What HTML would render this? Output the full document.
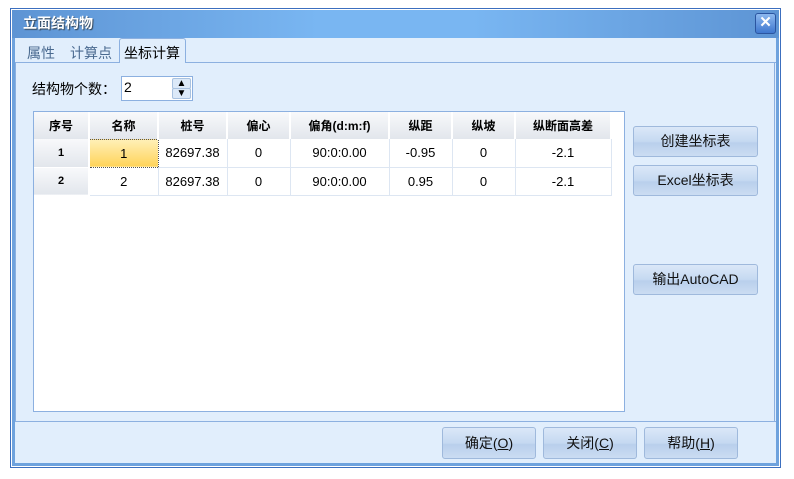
<!DOCTYPE html>
<html><head><meta charset="utf-8"><style>
*{margin:0;padding:0;box-sizing:border-box}
body{width:794px;height:479px;background:#fff;position:relative;overflow:hidden;font-family:"Liberation Sans","Noto Sans CJK SC",sans-serif;font-size:13px;color:#000}
.a{position:absolute}
.btn{position:absolute;border:1px solid #9fb9dc;border-radius:3px;background:linear-gradient(#dbe8f8,#c5d9f1 50%,#b9cfec 55%,#cbdcf2);text-align:center;font-size:13px;color:#111}
table{border-collapse:collapse;position:absolute;left:34px;top:112px;font-size:13px}
td{border-right:1px solid #dde6f2;border-bottom:1px solid #dde6f2;text-align:center;height:28px;padding:0}
th{height:27px;font-size:12px;font-weight:bold;background:linear-gradient(#f8f9fb,#e2e6ec);border-right:2px solid #fff;padding:0}
td.rh{background:linear-gradient(#f8f9fb,#e2e6ec);font-weight:bold;font-size:11px;border-right:2px solid #fff;border-bottom:1px solid #fff}
</style></head><body>
<div class="a" style="left:10px;top:8px;width:771px;height:460px;border:1px solid #3c6fbf;background:#fff"></div>
<div class="a" style="left:12px;top:10px;width:767px;height:456px;background:#6ea2dd"></div>
<div class="a" style="left:12px;top:10px;width:767px;height:28px;background:linear-gradient(90deg,#5d94d4,#79b6f2 40%,#79b6f2 60%,#5d94d4)"></div>
<div class="a" style="left:23px;top:13px;color:#fff;font-weight:bold;font-size:14px;text-shadow:1px 1px 1px #345">立面结构物</div>
<div class="a" style="left:755px;top:13px;width:21px;height:21px;border:1px solid #2b55a0;border-radius:3px;background:linear-gradient(#8cb8ef,#3f77cf);color:#fff;font-weight:bold;font-size:15px;text-align:center;line-height:18px">✕</div>
<div class="a" style="left:15px;top:38px;width:761px;height:425px;background:#e1eefc"></div>
<div class="a" style="left:15px;top:62px;width:761px;height:1px;background:#8cb0e0"></div>
<div class="a" style="left:15px;top:62px;width:1px;height:360px;background:#8cb0e0"></div>
<div class="a" style="left:774px;top:62px;width:1px;height:360px;background:#8cb0e0"></div>
<div class="a" style="left:15px;top:421px;width:761px;height:1px;background:#8cb0e0"></div>
<div class="a" style="left:119px;top:38px;width:67px;height:25px;background:#e1eefc;border:1px solid #8cb0e0;border-bottom:none;border-radius:3px 3px 0 0"></div>
<div class="a" style="left:27px;top:43px;color:#4a6a90;font-size:14px">属性</div>
<div class="a" style="left:70px;top:43px;color:#4a6a90;font-size:14px">计算点</div>
<div class="a" style="left:124px;top:43px;font-size:14px">坐标计算</div>
<div class="a" style="left:32px;top:79px;font-size:14px">结构物个数：</div>
<div class="a" style="left:121px;top:76px;width:72px;height:25px;border:1px solid #8cb0e0;background:#fff;padding:2px 0 0 2px;font-size:14px">2</div>
<div class="a" style="left:172px;top:78px;width:19px;height:11px;border:1px solid #a9c2e0;border-radius:2px;background:#dce9f8;font-size:10px;text-align:center;line-height:9px">▲</div>
<div class="a" style="left:172px;top:88px;width:19px;height:11px;border:1px solid #a9c2e0;border-radius:2px;background:#dce9f8;font-size:10px;text-align:center;line-height:9px">▼</div>
<div class="a" style="left:33px;top:111px;width:592px;height:301px;border:1px solid #8cb0e0;background:#fff"></div>
<table>
<tr><th style="width:55px">序号</th><th style="width:69px">名称</th><th style="width:69px">桩号</th><th style="width:63px">偏心</th><th style="width:99px">偏角(d:m:f)</th><th style="width:63px">纵距</th><th style="width:63px">纵坡</th><th style="width:96px">纵断面高差</th></tr>
<tr><td class="rh">1</td><td style="background:linear-gradient(#fff0b8,#ffd35a);border:1px dotted #555">1</td><td>82697.38</td><td>0</td><td>90:0:0.00</td><td>-0.95</td><td>0</td><td>-2.1</td></tr>
<tr><td class="rh">2</td><td>2</td><td>82697.38</td><td>0</td><td>90:0:0.00</td><td>0.95</td><td>0</td><td>-2.1</td></tr>
</table>
<div class="btn" style="left:633px;top:126px;width:125px;height:31px;line-height:29px;font-size:14px">创建坐标表</div>
<div class="btn" style="left:633px;top:165px;width:125px;height:31px;line-height:29px;font-size:14px">Excel坐标表</div>
<div class="btn" style="left:633px;top:264px;width:125px;height:31px;line-height:29px;font-size:14px">输出AutoCAD</div>
<div class="btn" style="left:442px;top:427px;width:94px;height:32px;line-height:30px;font-size:14px">确定(<u>O</u>)</div>
<div class="btn" style="left:543px;top:427px;width:94px;height:32px;line-height:30px;font-size:14px">关闭(<u>C</u>)</div>
<div class="btn" style="left:644px;top:427px;width:94px;height:32px;line-height:30px;font-size:14px">帮助(<u>H</u>)</div>
</body></html>
